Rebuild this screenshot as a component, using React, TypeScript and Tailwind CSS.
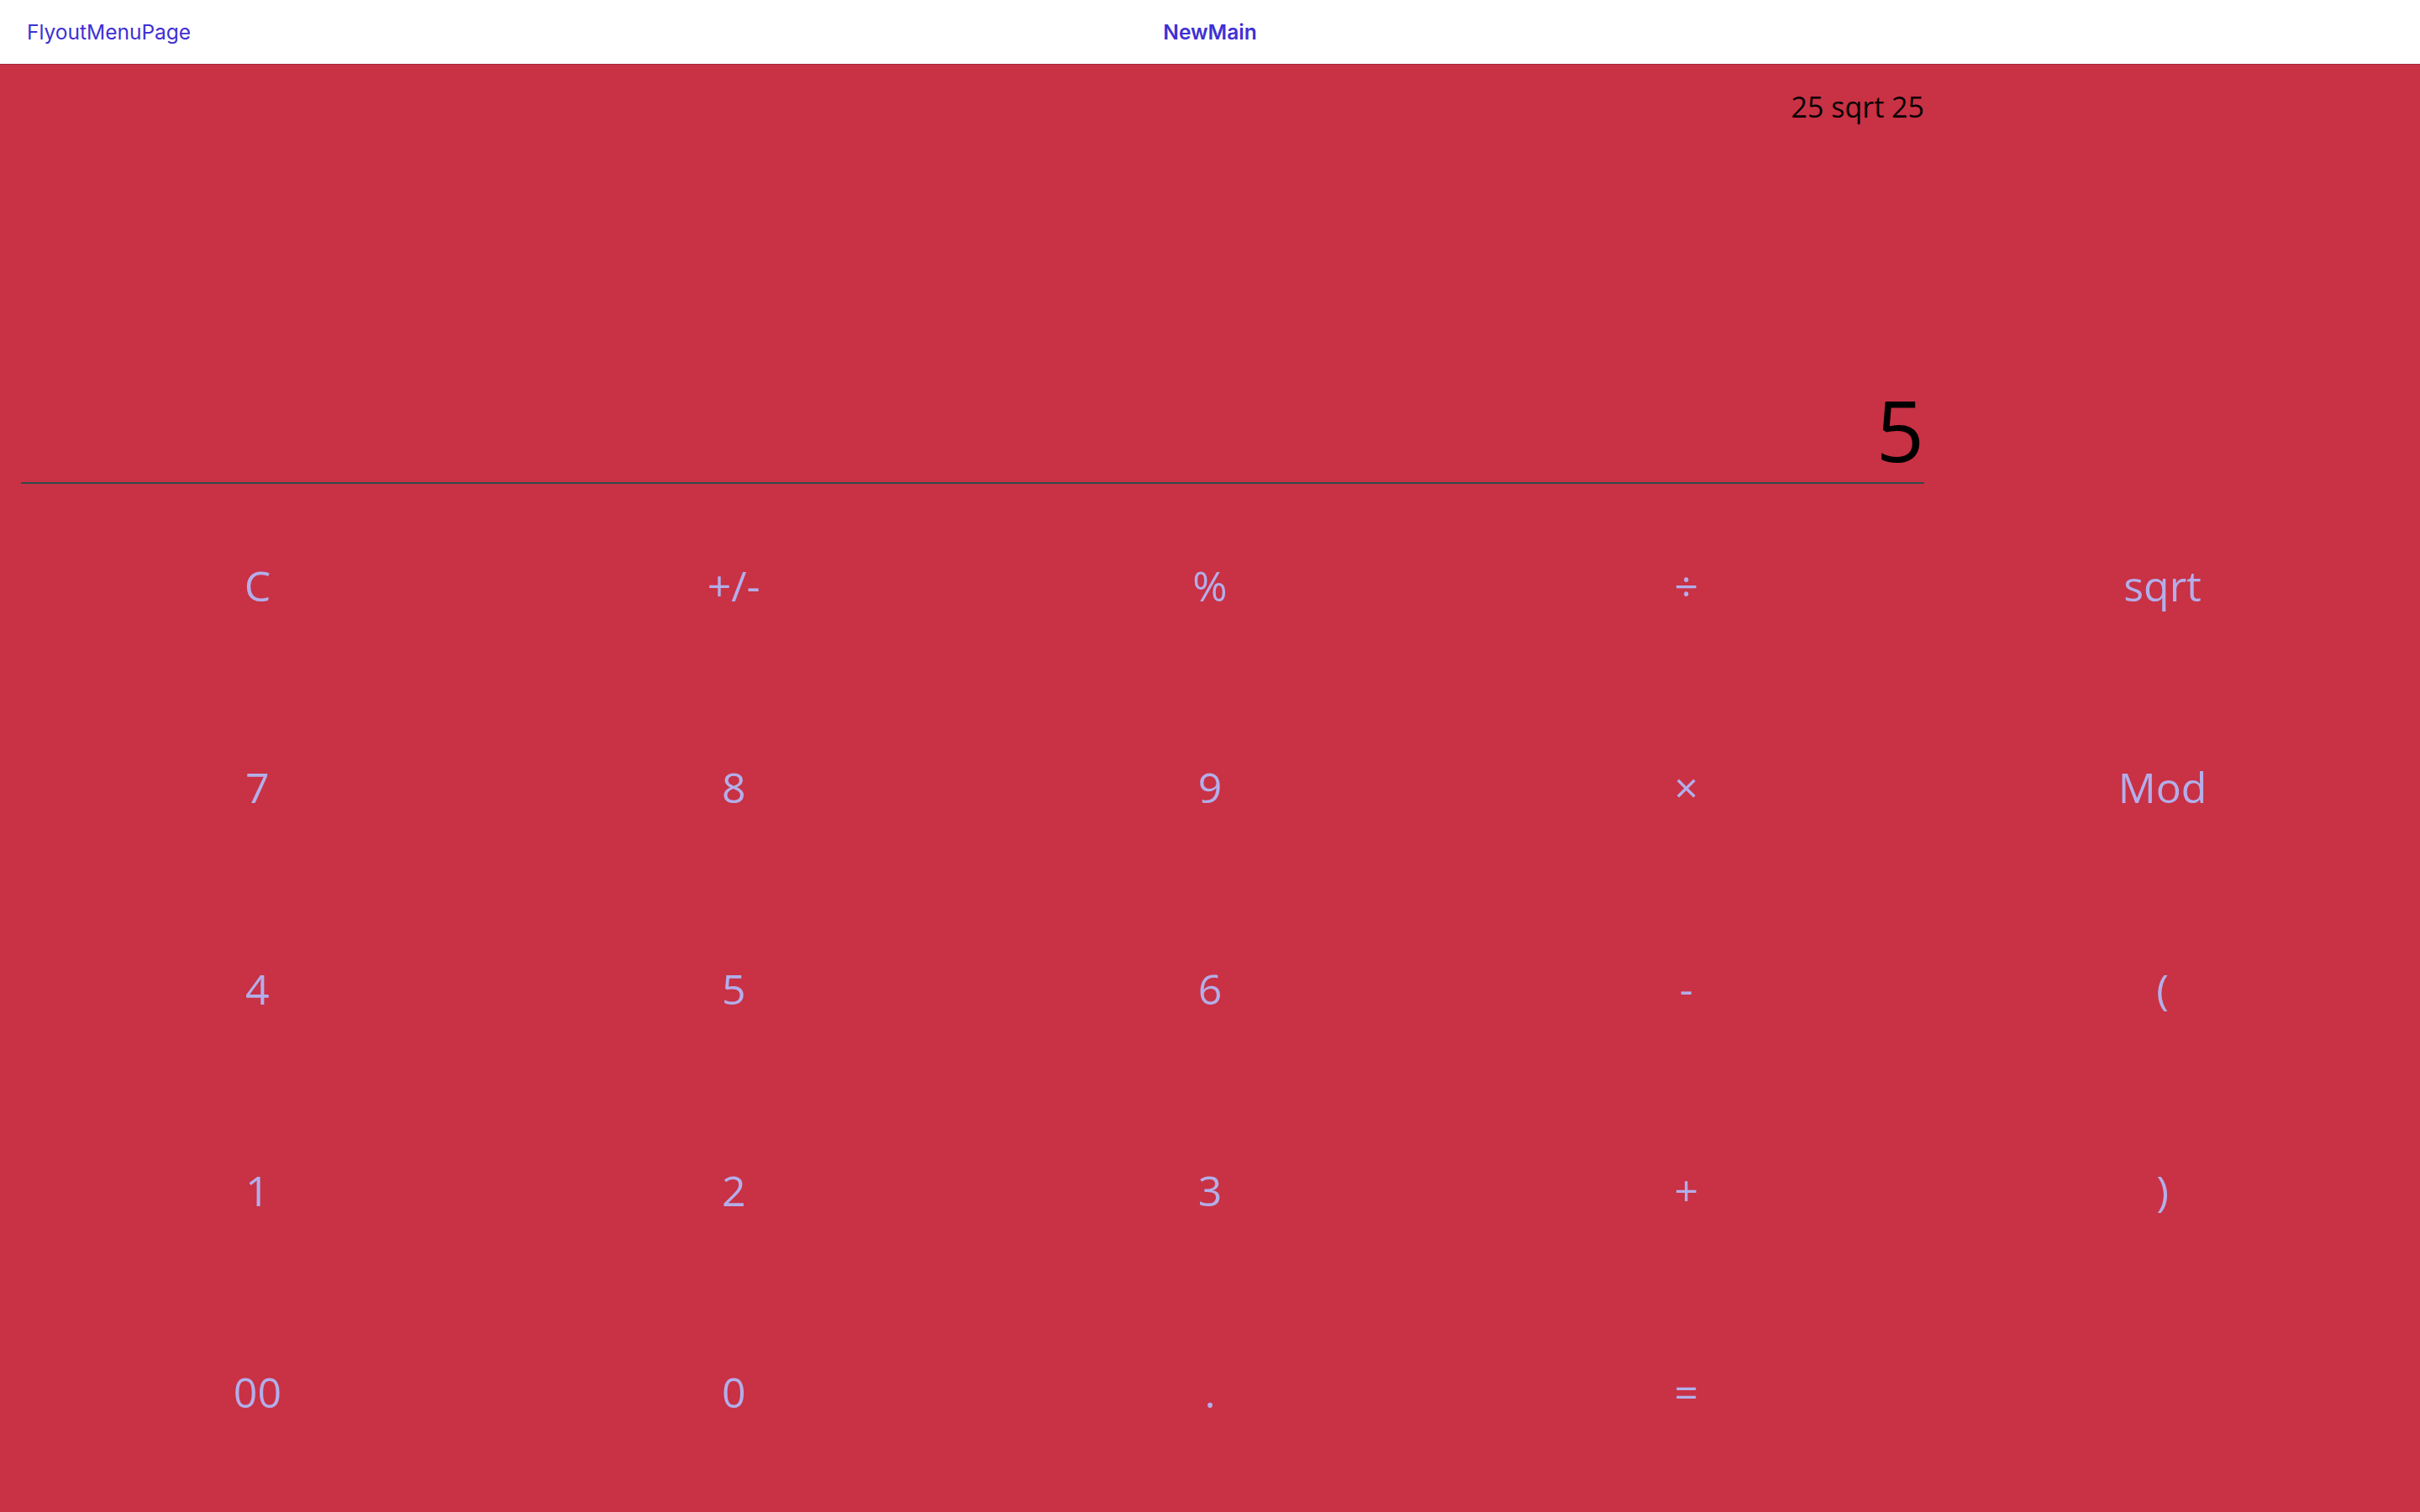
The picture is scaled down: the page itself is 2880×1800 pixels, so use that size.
import React from "react";

const keys: string[] = [
  "C", "+/-", "%", "÷", "sqrt",
  "7", "8", "9", "×", "Mod",
  "4", "5", "6", "-", "(",
  "1", "2", "3", "+", ")",
  "00", "0", ".", "=", "",
];

export default function App() {
  return (
    <div className="w-[2880px] h-[1800px] flex flex-col overflow-hidden bg-[#c93144]">
      <header className="h-[77px] shrink-0 bg-white border-b border-[#a3283a] relative flex items-center font-['Inter',sans-serif] text-[24.5px] text-[#3f30d4]">
        <div className="pl-[32px]">FlyoutMenuPage</div>
        <div className="absolute left-1/2 -translate-x-1/2 font-semibold">NewMain</div>
      </header>
      <main className="flex-1 flex flex-col px-[23px] font-['Open_Sans',sans-serif]">
        <div className="ml-[2px] w-[2265px] h-[499px] flex flex-col border-b-2 border-[#2f4b4b]">
          <div className="pt-[26px] text-right text-[34px] leading-[48px] text-black">25 sqrt 25</div>
          <div className="flex-1" />
          <div className="pb-[13px] text-right text-[100px] leading-[100px] text-black">5</div>
        </div>
        <div className="mt-[1px] grid grid-cols-5 auto-rows-[240px]">
          {keys.map((k, i) => (
            <div
              key={i}
              className="flex items-center justify-center text-[50px] text-[#b3aeea]"
            >
              {k}
            </div>
          ))}
        </div>
      </main>
    </div>
  );
}
